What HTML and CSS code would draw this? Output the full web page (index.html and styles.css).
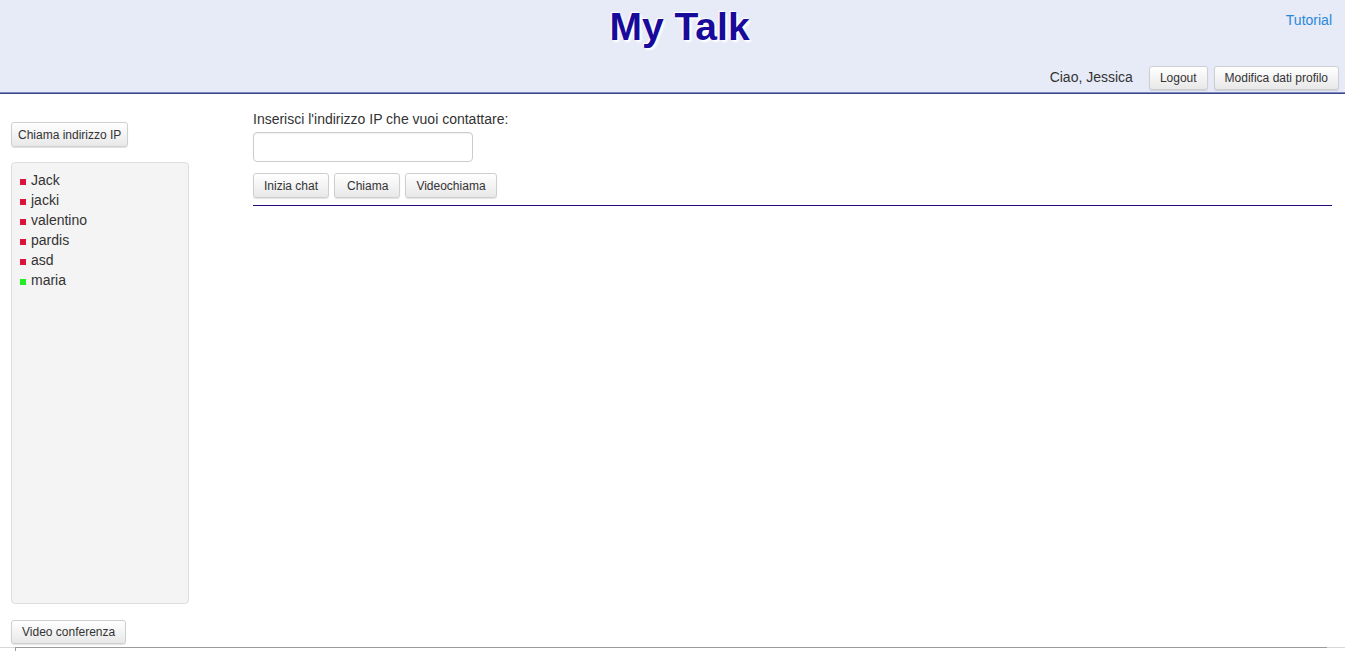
FILE: index.html
```html
<!DOCTYPE html>
<html lang="it">
<head>
<meta charset="utf-8">
<title>My Talk</title>
<link rel="stylesheet" href="styles.css">
</head>
<body>
<header class="header">
  <div class="header-top">
    <div class="spacer"></div>
    <h1 class="title">My Talk</h1>
    <div class="tutorial-wrap"><a class="tutorial" href="#">Tutorial</a></div>
  </div>
  <div class="userbar">
    <span class="greeting">Ciao, Jessica</span>
    <button class="btn">Logout</button>
    <button class="btn">Modifica dati profilo</button>
  </div>
</header>
<div class="content">
  <aside class="sidebar">
    <button class="btn btn-narrow">Chiama indirizzo IP</button>
    <ul class="contacts">
      <li><span class="dot off"></span>Jack</li>
      <li><span class="dot off"></span>jacki</li>
      <li><span class="dot off"></span>valentino</li>
      <li><span class="dot off"></span>pardis</li>
      <li><span class="dot off"></span>asd</li>
      <li><span class="dot on"></span>maria</li>
    </ul>
    <button class="btn">Video conferenza</button>
  </aside>
  <main class="main">
    <label class="ip-label" for="ip">Inserisci l'indirizzo IP che vuoi contattare:</label>
    <input class="ip-input" id="ip" type="text">
    <div class="actions">
      <button class="btn">Inizia chat</button>
      <button class="btn btn-wide">Chiama</button>
      <button class="btn">Videochiama</button>
    </div>
    <div class="divider"></div>
  </main>
</div>
<div class="footer"><div class="footer-box"></div></div>
</body>
</html>
```

FILE: styles.css
```css
html, body {
  margin: 0;
  padding: 0;
  background: #fff;
  font-family: "Liberation Sans", Arial, sans-serif;
  color: #333;
  overflow: hidden;
}

.header {
  background: #e7ebf7;
  height: 92px;
  border-bottom: 1px solid #7c88c4;
  box-shadow: 0 1px 0 #3d477f;
  box-sizing: content-box;
  display: flex;
  flex-direction: column;
}

.header-top {
  display: grid;
  grid-template-columns: 1fr auto 1fr;
  align-items: start;
}

.title {
  margin: 5px 0 0 14px;
  font-size: 39px;
  line-height: 44px;
  font-weight: bold;
  color: #180a9a;
  text-shadow: 2px 2px 2px #ffffff, -1px -1px 1px #ffffff;
}

.tutorial-wrap {
  justify-self: end;
  padding: 11px 13px 0 0;
}

.tutorial {
  font-size: 14px;
  line-height: 16px;
  color: #2a88d8;
  text-decoration: none;
}

.userbar {
  margin-top: auto;
  margin-bottom: 2px;
  display: flex;
  justify-content: flex-end;
  align-items: center;
  gap: 6px;
  padding-right: 6px;
}

.greeting {
  font-size: 14px;
  line-height: 16px;
  margin-right: 10px;
  padding-bottom: 3px;
}

.btn {
  font-family: "Liberation Sans", Arial, sans-serif;
  font-size: 12px;
  line-height: 16px;
  color: #333;
  padding: 3px 10px;
  height: 24px;
  box-sizing: border-box;
  border: 1px solid #cfcfcf;
  border-radius: 3px;
  background: linear-gradient(#ffffff, #e8e8e8);
  box-shadow: 0 1px 1px rgba(0, 0, 0, 0.12);
  cursor: pointer;
}

.btn-narrow {
  padding: 3px 6px;
  height: 25px;
}

.content {
  display: flex;
  padding: 0 13px 0 11px;
  height: 554px;
}

.sidebar {
  width: 178px;
  flex: none;
  display: flex;
  flex-direction: column;
  align-items: flex-start;
  padding-top: 29px;
}

.contacts {
  list-style: none;
  margin: 15px 0 16px 0;
  padding: 7px 8px;
  width: 178px;
  height: 442px;
  box-sizing: border-box;
  background: #f4f4f4;
  border: 1px solid #dddddd;
  border-radius: 4px;
}

.contacts li {
  font-size: 14px;
  line-height: 20px;
  color: #333;
  display: flex;
  align-items: baseline;
}

.dot {
  display: inline-block;
  width: 6px;
  height: 6px;
  margin-right: 5px;
}

.dot.off { background: #dc143c; }
.dot.on { background: #22ee22; }

.main {
  flex: 1;
  margin-left: 64px;
  padding-top: 16px;
  display: flex;
  flex-direction: column;
  align-items: flex-start;
}

.ip-label {
  font-size: 14px;
  line-height: 20px;
  color: #333;
}

.ip-input {
  margin-top: 3px;
  width: 220px;
  height: 30px;
  box-sizing: border-box;
  border: 1px solid #cccccc;
  border-radius: 4px;
  background: #fff;
  box-shadow: inset 0 1px 1px rgba(0, 0, 0, 0.06);
}

.actions {
  margin-top: 11px;
  display: flex;
  gap: 5px;
}

.actions .btn {
  height: 25px;
}

.actions .btn-wide {
  padding: 3px 11px 3px 12px;
}

.divider {
  align-self: stretch;
  margin-top: 7px;
  border-top: 1px solid #2a0a7a;
  height: 0;
}

.footer {
  border-top: 1px solid #d8d8d8;
  margin-top: 0;
  height: 20px;
}

.footer-box {
  margin: -1px 18px 0 15px;
  border-top: 1px solid #9a9a9a;
  border-left: 1px solid #9a9a9a;
  height: 20px;
}
```
